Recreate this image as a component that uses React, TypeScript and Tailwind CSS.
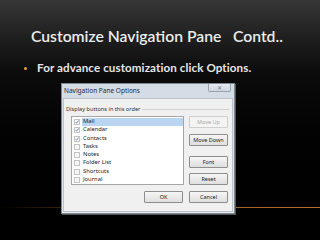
import React from "react";

const items = [
  { label: "Mail", checked: true, selected: true },
  { label: "Calendar", checked: true },
  { label: "Contacts", checked: true },
  { label: "Tasks", checked: false },
  { label: "Notes", checked: false },
  { label: "Folder List", checked: false },
  { label: "Shortcuts", checked: false },
  { label: "Journal", checked: false },
];

function Check({ on }: { on: boolean }) {
  return (
    <span className="w-[6px] h-[6px] border border-[#c4c4c4] bg-[#f6f6f6] flex items-center justify-center shrink-0">
      {on && (
        <svg width="6" height="6" viewBox="0 0 6 6">
          <path d="M1 3.2 L2.4 4.8 L5.2 0.8" stroke="#3b4a7a" strokeWidth="0.9" fill="none" />
        </svg>
      )}
    </span>
  );
}

function Btn({ children, disabled }: { children: React.ReactNode; disabled?: boolean }) {
  return (
    <div
      className={`w-[39px] h-[12px] flex items-center justify-center border rounded-[1px] text-[5.5px] ${
        disabled
          ? "border-[#cfcfcf] bg-[#f4f4f4] text-[#aaaaaa]"
          : "border-[#8e8e8e] bg-gradient-to-b from-[#f6f6f6] to-[#dedede] text-[#222]"
      }`}
    >
      {children}
    </div>
  );
}

export default function App() {
  return (
    <div
      className="relative w-[320px] h-[240px] overflow-hidden bg-gradient-to-b from-[#363636] via-[#0c0c0c] via-30% to-black"
      style={{ fontFamily: "Lato, 'Noto Sans', sans-serif" }}
    >
      {/* faint orange rule */}
      <div className="absolute left-0 right-0 top-[207px] h-px bg-gradient-to-r from-transparent via-[#8a5a20] to-[#b07030]" />

      <div className="relative flex flex-col">
        <h1 className="mt-[27px] ml-[31px] text-[15.7px] leading-[18px] font-semibold text-[#ececec] whitespace-pre">
          Customize Navigation Pane   Contd..
        </h1>

        <div className="mt-[17px] ml-[24px] flex items-center gap-[10px]">
          <span className="w-[3px] h-[3px] rounded-full bg-[#e4a23a]" />
          <span className="text-[11.6px] leading-[12px] font-bold text-[#e6e6e6] tracking-[0.1px]">
            For advance customization click Options.
          </span>
        </div>

        {/* dialog */}
        <div
          className="mt-[9px] ml-[61px] w-[174px] h-[131px] flex flex-col border border-[#7f8790] bg-gradient-to-b from-[#d3dbe4] to-[#e2e7ed] shadow-[1px_1px_0_#555]"
          style={{ fontFamily: "'Noto Sans', 'Liberation Sans', sans-serif" }}
        >
          <div className="h-[14px] flex items-start justify-between pl-[2px] pr-[3px]">
            <span className="mt-[3px] text-[6.5px] leading-[7px] text-[#1e2a3a]">Navigation Pane Options</span>
            <span className="w-[23px] h-[8px] border border-t-0 border-[#98a2ae] rounded-b-[2px] bg-gradient-to-b from-[#e6ebf0] to-[#cdd5de] flex items-center justify-center text-[6px] leading-none text-[#6f7a88]">
              ✕
            </span>
          </div>

          <div className="mx-[1px] mb-[1px] flex-1 bg-[#f0f0f0] border border-[#bcc3cb] flex flex-col">
            <div className="mt-[7px] ml-[2px] mr-[3px] flex items-center gap-[2px]">
              <span className="text-[5.6px] leading-[6px] text-[#333] whitespace-nowrap">Display buttons in this order</span>
              <span className="flex-1 h-px bg-[#d0d0d0]" />
            </div>

            <div className="mt-[4px] flex">
              <div className="ml-[7px] w-[113px] h-[69px] bg-white border border-[#a6a6a6] flex flex-col pt-[1px]">
                {items.map((it) => (
                  <div key={it.label} className="h-[8.4px] flex items-center pl-[2px]">
                    <Check on={it.checked} />
                    <span
                      className={`ml-[2px] flex-1 h-[8px] flex items-center pl-[1px] text-[5.8px] leading-none text-[#222] ${
                        it.selected ? "bg-[#b9d5f2]" : ""
                      }`}
                    >
                      {it.label}
                    </span>
                  </div>
                ))}
              </div>

              <div className="ml-[5px] flex flex-col">
                <Btn disabled>Move Up</Btn>
                <div className="mt-[6px]">
                  <Btn>Move Down</Btn>
                </div>
                <div className="mt-[10px]">
                  <Btn>Font</Btn>
                </div>
                <div className="mt-[5px]">
                  <Btn>Reset</Btn>
                </div>
              </div>
            </div>

            <div className="mt-[6px] ml-[80px] flex gap-[6px]">
              <Btn>OK</Btn>
              <Btn>Cancel</Btn>
            </div>
          </div>
        </div>
      </div>
    </div>
  );
}
